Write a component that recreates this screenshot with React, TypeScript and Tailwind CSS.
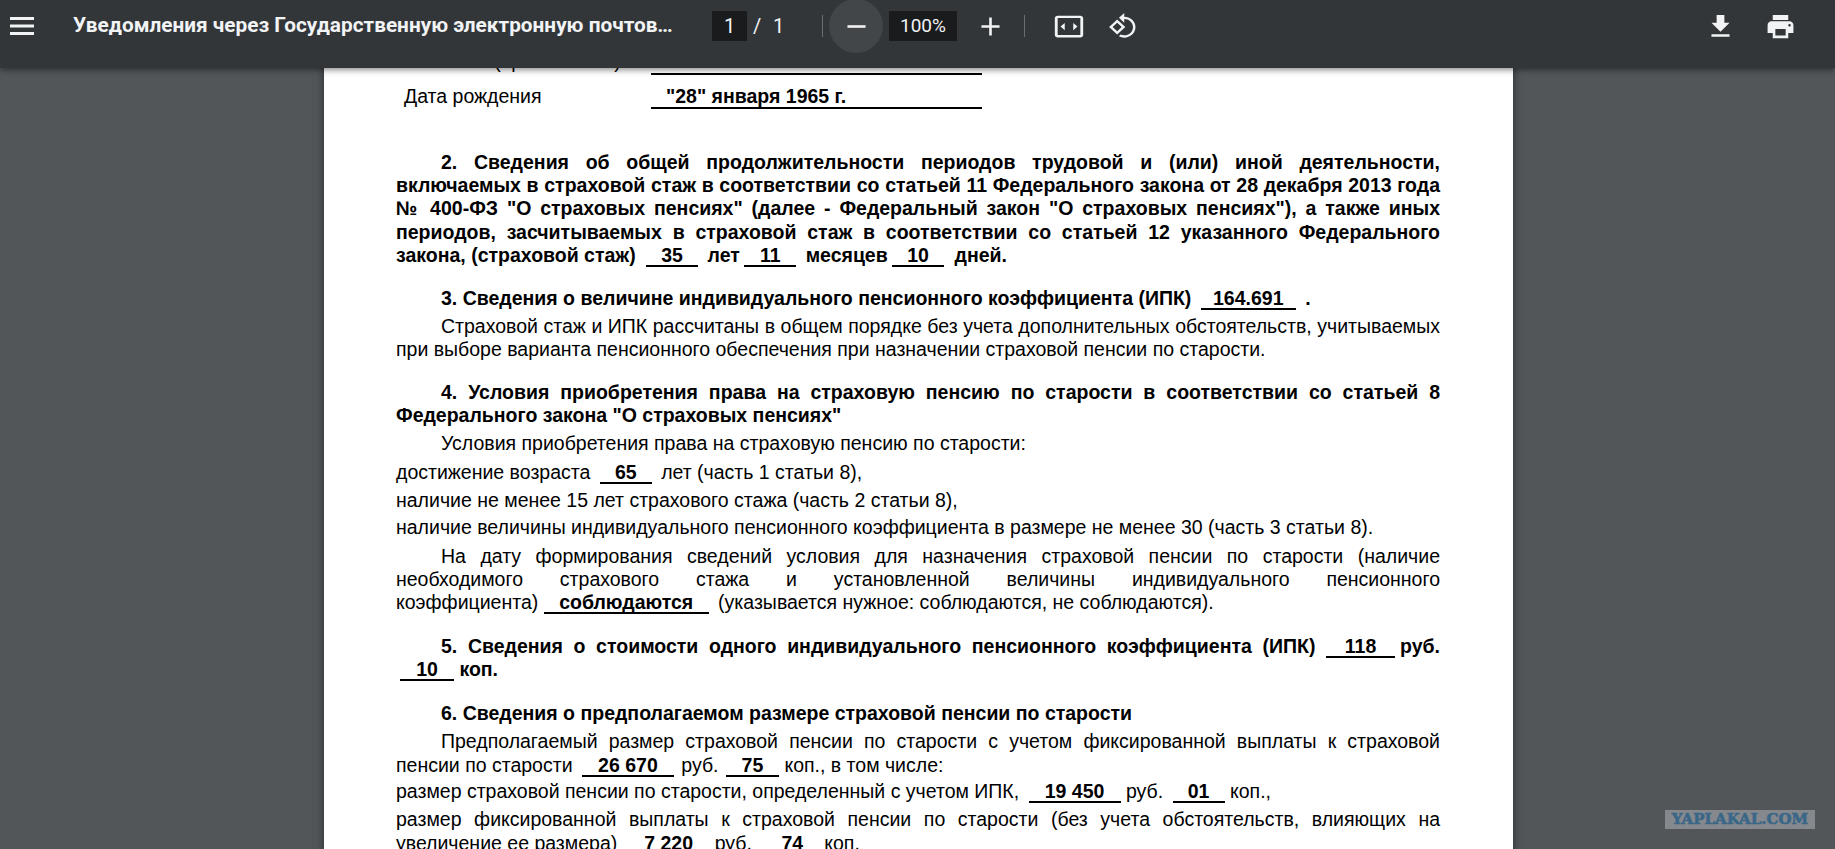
import clsx from 'clsx'
import type { ReactNode } from 'react'

function Icon({ d, w, h }: { d: string; w: number; h: number }) {
  return (
    <svg
      viewBox="0 0 24 24"
      width={w}
      height={h}
      preserveAspectRatio="none"
      fill="#f1f3f4"
      aria-hidden="true"
    >
      <path d={d} />
    </svg>
  )
}

const icons = {
  menu: 'M3 18h18v-2H3v2zm0-5h18v-2H3v2zm0-7v2h18V6H3z',
  minus: 'M19 13H5v-2h14v2z',
  plus: 'M19 13h-6v6h-2v-6H5v-2h6V5h2v6h6v2z',
  fit: 'M20 3H4c-1.1 0-2 .9-2 2v14c0 1.1.9 2 2 2h16c1.1 0 2-.9 2-2V5c0-1.1-.9-2-2-2zm0 16H4V5h16v14zM6 12l3-3v6zM18 12l-3-3v6z',
  rotate:
    'M7.34 6.41L.86 12.9l6.49 6.48 6.49-6.48-6.5-6.49zM3.69 12.9l3.66-3.66L11 12.9l-3.66 3.66-3.65-3.66zm15.67-6.26C17.61 4.88 15.3 4 13 4V.76L8.76 5 13 9.24V6c1.79 0 3.58.68 4.95 2.05 2.73 2.73 2.73 7.17 0 9.9C16.58 19.32 14.79 20 13 20c-.97 0-1.94-.21-2.84-.61l-1.49 1.49C10.02 21.62 11.51 22 13 22c2.3 0 4.61-.88 6.36-2.64 3.52-3.51 3.52-9.21 0-12.72z',
  download: 'M19 9h-4V3H9v6H5l7 7 7-7zM5 18v2h14v-2H5z',
  print:
    'M19 8H5c-1.66 0-3 1.34-3 3v6h4v4h12v-4h4v-6c0-1.66-1.34-3-3-3zm-3 11H8v-5h8v5zm3-7c-.55 0-1-.45-1-1s.45-1 1-1 1 .45 1 1-.45 1-1 1zm-1-9H6v4h12V3z',
}

function Separator({ className }: { className: string }) {
  return <div className={clsx('h-[22px] w-px shrink-0 bg-[#6a6e71]', className)} />
}

function Toolbar() {
  return (
    <div className="absolute inset-x-0 top-0 z-10 h-[68px] bg-[#323639] font-['Roboto',sans-serif] text-[#f1f3f4] shadow-[0_2px_6px_rgba(0,0,0,0.45)]">
      <div className="flex h-[52px] items-center">
        <div className="ml-[6px] flex w-[32px] shrink-0 justify-center">
          <Icon d={icons.menu} w={32} h={36} />
        </div>
        <div className="ml-[35px] w-[604px] shrink-0 truncate text-[20.8px] font-bold">
          Уведомления через Государственную электронную почтовую связь
        </div>
        <div className="ml-[35px] flex h-[30px] w-[35px] shrink-0 items-center justify-center bg-[#191b1c] text-[20px]">
          1
        </div>
        <span className="ml-[6px] w-[8px] shrink-0 text-[20px]">/</span>
        <span className="ml-[12px] w-[11px] shrink-0 text-[20px]">1</span>
        <Separator className="ml-[38px]" />
        <div className="ml-[6px] flex size-[54px] shrink-0 items-center justify-center rounded-full bg-[#424649]">
          <Icon d={icons.minus} w={31} h={31} />
        </div>
        <div className="ml-[6px] flex h-[30px] w-[68px] shrink-0 items-center justify-center bg-[#191b1c] text-[19px]">
          100%
        </div>
        <div className="ml-[18px] flex w-[31px] shrink-0 justify-center">
          <Icon d={icons.plus} w={31} h={31} />
        </div>
        <Separator className="ml-[18px]" />
        <div className="ml-[27px] flex w-[34px] shrink-0 justify-center">
          <Icon d={icons.fit} w={34} h={29} />
        </div>
        <div className="ml-[22px] flex w-[30px] shrink-0 justify-center">
          <Icon d={icons.rotate} w={30} h={28} />
        </div>
        <div className="ml-auto flex w-[31px] shrink-0 justify-center">
          <Icon d={icons.download} w={31} h={31} />
        </div>
        <div className="ml-[29px] mr-[39px] flex w-[31px] shrink-0 justify-center">
          <Icon d={icons.print} w={31} h={31} />
        </div>
      </div>
    </div>
  )
}

function Blank({ w, children }: { w: string; children: ReactNode }) {
  return (
    <span
      className={clsx(
        'inline-block border-b-2 border-black text-center font-bold leading-[20px] [text-align-last:center]',
        w,
      )}
    >
      {children}
    </span>
  )
}

function Line({
  children,
  mt,
  fit,
  indent,
  bold,
}: {
  children: ReactNode
  mt?: string
  fit?: boolean
  indent?: boolean
  bold?: boolean
}) {
  return (
    <div
      className={clsx(
        'h-[23.4px]',
        mt,
        fit && '[text-align-last:justify]',
        indent && 'pl-[45px]',
        bold && 'font-bold',
      )}
    >
      {children}
    </div>
  )
}

function Page() {
  return (
    <div className="ml-[324px] w-[1189px] shrink-0 bg-white pb-10 pl-[72px] pr-[73px] pt-[50px] font-['Liberation_Sans',Arial,sans-serif] text-[19.5px] leading-[23.4px] text-black shadow-[0_0_8px_rgba(0,0,0,0.5)]">
      <div className="flex">
        <div className="ml-[8px] w-[247px] shrink-0">Отчество (при наличии)</div>
        <div className="h-[25px] w-[331px] border-b-2 border-black" />
      </div>
      <div className="mt-[9px] flex">
        <div className="ml-[8px] w-[247px] shrink-0 pt-px">Дата рождения</div>
        <div className="h-[25px] w-[331px] border-b-2 border-black pl-[15px] pt-px font-bold">
          "28" января 1965 г.
        </div>
      </div>

      <div className="mt-[41.5px]">
        <Line fit indent bold>2. Сведения об общей продолжительности периодов трудовой и (или) иной деятельности,</Line>
        <Line fit bold>включаемых в страховой стаж в соответствии со статьей 11 Федерального закона от 28 декабря 2013 года</Line>
        <Line fit bold>№ 400-ФЗ "О страховых пенсиях" (далее - Федеральный закон "О страховых пенсиях"), а также иных</Line>
        <Line fit bold>периодов, засчитываемых в страховой стаж в соответствии со статьей 12 указанного Федерального</Line>
        <Line bold>
          закона, (страховой стаж) <Blank w="w-[52px] ml-[5px]">35</Blank> <span className="ml-[4px]">лет</span>{' '}
          <Blank w="w-[52px] -ml-px">11</Blank> <span className="ml-[4px]">месяцев</span>{' '}
          <Blank w="w-[52px] -ml-px">10</Blank> <span className="ml-[5px]">дней.</span>
        </Line>
      </div>

      <Line indent bold mt="mt-[19.5px]">
        3. Сведения о величине индивидуального пенсионного коэффициента (ИПК) <Blank w="w-[95px] ml-[4px]">164.691</Blank>{' '}
        <span className="ml-[4px]">.</span>
      </Line>
      <div className="mt-[4.6px]">
        <Line fit indent>Страховой стаж и ИПК рассчитаны в общем порядке без учета дополнительных обстоятельств, учитываемых</Line>
        <Line>при выборе варианта пенсионного обеспечения при назначении страховой пенсии по старости.</Line>
      </div>

      <div className="mt-[19px]">
        <Line fit indent bold>4. Условия приобретения права на страховую пенсию по старости в соответствии со статьей 8</Line>
        <Line bold>Федерального закона "О страховых пенсиях"</Line>
      </div>
      <Line indent mt="mt-[4.7px]">Условия приобретения права на страховую пенсию по старости:</Line>
      <Line mt="mt-[5px]">
        достижение возраста <Blank w="w-[52px] ml-[4px]">65</Blank> <span className="ml-[4px]">лет (часть 1 статьи 8),</span>
      </Line>
      <Line mt="mt-[4.6px]">наличие не менее 15 лет страхового стажа (часть 2 статьи 8),</Line>
      <Line mt="mt-[3.6px]">наличие величины индивидуального пенсионного коэффициента в размере не менее 30 (часть 3 статьи 8).</Line>
      <div className="mt-[5.6px]">
        <Line fit indent>На дату формирования сведений условия для назначения страховой пенсии по старости (наличие</Line>
        <Line fit>необходимого страхового стажа и установленной величины индивидуального пенсионного</Line>
        <Line>
          коэффициента) <Blank w="w-[165px]">соблюдаются</Blank> <span className="ml-[4px]">(указывается нужное: соблюдаются, не соблюдаются).</span>
        </Line>
      </div>

      <div className="mt-[19.8px]">
        <Line fit indent bold>
          5. Сведения о стоимости одного индивидуального пенсионного коэффициента (ИПК) <Blank w="w-[69px]">118</Blank>
          <span className="ml-[5px]">руб.</span>
        </Line>
        <Line bold>
          <Blank w="w-[54px] ml-[4px]">10</Blank> коп.
        </Line>
      </div>

      <Line indent bold mt="mt-[21px]">6. Сведения о предполагаемом размере страховой пенсии по старости</Line>
      <div className="mt-[4.6px]">
        <Line fit indent>Предполагаемый размер страховой пенсии по старости с учетом фиксированной выплаты к страховой</Line>
        <Line>
          пенсии по старости <Blank w="w-[92px] ml-[4px]">26 670</Blank> <span className="ml-[2px]">руб.</span>{' '}
          <Blank w="w-[53px] ml-[2px]">75</Blank> коп., в том числе:
        </Line>
      </div>
      <Line mt="mt-[3.2px]">
        размер страховой пенсии по старости, определенный с учетом ИПК, <Blank w="w-[92px] ml-[4px]">19 450</Blank> руб.{' '}
        <Blank w="w-[52px] ml-[4px]">01</Blank> коп.,
      </Line>
      <div className="mt-[4.6px]">
        <Line fit>размер фиксированной выплаты к страховой пенсии по старости (без учета обстоятельств, влияющих на</Line>
        <Line>
          увеличение ее размера) <Blank w="w-[92px]">7 220</Blank>руб.<Blank w="w-[53px] ml-[14px]">74</Blank> коп.
        </Line>
      </div>
    </div>
  )
}

export default function App() {
  return (
    <div className="relative flex h-screen items-start overflow-hidden bg-[#525659]">
      <Toolbar />
      <Page />
      <div className="absolute left-[1665px] top-[810px] flex h-[19px] w-[150px] items-center justify-center bg-[#85898d] font-['DejaVu_Serif',serif] text-[15px] font-bold text-[#3a6688] [-webkit-text-stroke:0.6px_#3a6688]">
        YAPLAKAL.COM
      </div>
    </div>
  )
}
